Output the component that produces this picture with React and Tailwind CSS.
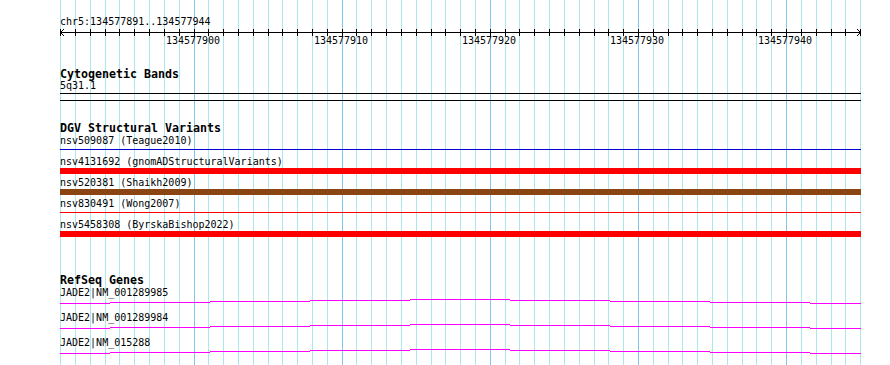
import React from 'react';

// Ventana del navegador: chr5:134577891..134577944 (54 bases en 800px)
const START = 134577891;
const BASES = 54;
const PX = 800 / BASES;
const gx = i => Math.floor(60.7 + i * PX);

const mono = { fontFamily: '"DejaVu Sans Mono", "Liberation Mono", monospace' };

const variants = [
  { label: 'nsv509087 (Teague2010)', kind: 'thin', color: '#0000d0' },
  { label: 'nsv4131692 (gnomADStructuralVariants)', kind: 'thick', color: '#ff0000' },
  { label: 'nsv520381 (Shaikh2009)', kind: 'thick', color: '#8b4513' },
  { label: 'nsv830491 (Wong2007)', kind: 'thin', color: '#ff0000' },
  { label: 'nsv5458308 (ByrskaBishop2022)', kind: 'thick', color: '#ff0000' },
];

const genes = ['JADE2|NM_001289985', 'JADE2|NM_001289984', 'JADE2|NM_015288'];

// Escalones de la linea del gen (x local, desplazamiento y)
const steps = [
  [0, 50, 4], [50, 150, 3], [150, 250, 2], [250, 350, 1], [350, 450, 0],
  [450, 550, 1], [550, 650, 2], [650, 750, 3], [750, 801, 4],
];

function Grid() {
  const lines = [];
  for (let i = 0; i <= BASES; i++) {
    const major = (START + i) % 10 === 0;
    lines.push(
      <rect key={i} x={gx(i)} y={0} width={1} height={365} fill={major ? '#80c8ee' : '#aae8ee'} />
    );
  }
  return (
    <svg className="absolute inset-0" width={890} height={365} shapeRendering="crispEdges">
      {lines}
    </svg>
  );
}

function Ruler() {
  const ticks = [];
  const labels = [];
  for (let i = 0; i <= BASES; i++) {
    const x = gx(i) - 60;
    ticks.push(<rect key={i} x={x} y={1} width={1} height={7} fill="#000" />);
    if ((START + i) % 10 === 0) {
      labels.push(
        <text key={i} x={x - 1} y={16} textAnchor="middle" fontSize={10} fill="#000" style={mono}>
          {START + i}
        </text>
      );
    }
  }
  return (
    <svg width={802} height={20} className="block">
      <rect x={0} y={4} width={801} height={1} fill="#000" shapeRendering="crispEdges" />
      <g shapeRendering="crispEdges">{ticks}</g>
      <polyline points="4,1 0.5,4.5 4,8" fill="none" stroke="#000" strokeWidth={1} />
      <polyline points="797,1 800.5,4.5 797,8" fill="none" stroke="#000" strokeWidth={1} />
      {labels}
    </svg>
  );
}

function TrackTitle({ children, className = '' }) {
  return (
    <div className={`text-[11.63px] leading-[12px] font-bold text-black whitespace-nowrap ${className}`}>
      {children}
    </div>
  );
}

function Label({ children }) {
  return <div className="h-[12px] text-[10px] leading-[12px] text-black whitespace-nowrap">{children}</div>;
}

function VariantRow({ v }) {
  return (
    <div className="flex flex-col h-[21px]">
      <Label>{v.label}</Label>
      <div className="h-[9px] w-[801px]">
        {v.kind === 'thick' ? (
          <div className="h-[6px] w-full" style={{ backgroundColor: v.color }} />
        ) : (
          <div className="h-[1px] w-full mt-[2px]" style={{ backgroundColor: v.color }} />
        )}
      </div>
    </div>
  );
}

function GeneRow({ name }) {
  return (
    <div className="flex flex-col h-[25px]">
      <Label>{name}</Label>
      <svg width={802} height={13} className="block" shapeRendering="crispEdges">
        {steps.map(([a, b, dy], k) => (
          <rect key={k} x={a} y={dy} width={b - a} height={1} fill="#ff00ff" />
        ))}
      </svg>
    </div>
  );
}

function App() {
  return (
    <div className="relative w-[890px] h-[365px] bg-white overflow-hidden" style={mono}>
      <Grid />

      <div className="relative pl-[60px] pt-[16px] w-[862px]">
        {/* Locus y regla */}
        <div className="text-[10px] leading-[12px] text-black">chr5:134577891..134577944</div>
        <Ruler />

        {/* Bandas citogeneticas */}
        <TrackTitle className="mt-[20px]">Cytogenetic Bands</TrackTitle>
        <Label>5q31.1</Label>
        <div className="mt-[1px] h-[8px] w-[801px] border-y border-black" />

        {/* Variantes estructurales */}
        <TrackTitle className="mt-[21px]">DGV Structural Variants</TrackTitle>
        <div className="mt-[1px]">
          {variants.map(v => (
            <VariantRow key={v.label} v={v} />
          ))}
        </div>

        {/* Genes RefSeq */}
        <TrackTitle className="mt-[34px]">RefSeq Genes</TrackTitle>
        <div className="mt-[1px]">
          {genes.map(g => (
            <GeneRow key={g} name={g} />
          ))}
        </div>
      </div>
    </div>
  );
}

export default App;
